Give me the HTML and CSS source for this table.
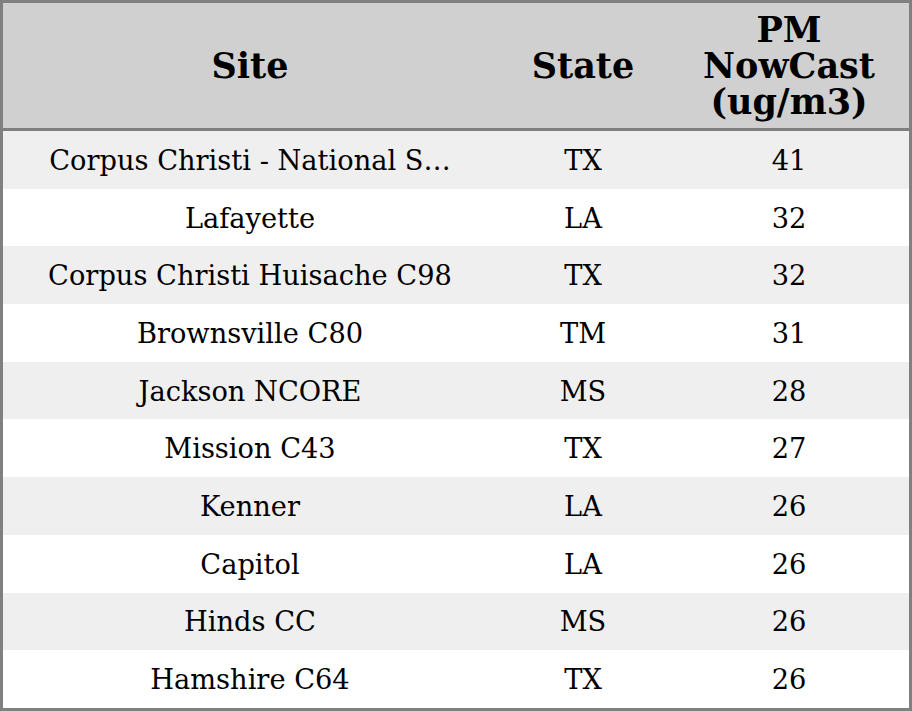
FILE: index.html
```html
<!DOCTYPE html>
<html>
<head>
<meta charset="utf-8">
<link rel="stylesheet" href="styles.css">
</head>
<body>
<div class="frame">
<table class="grid">
<colgroup><col class="c-site"><col class="c-state"><col class="c-pm"></colgroup>
<thead>
<tr><th>Site</th><th>State</th><th>PM<br>NowCast<br>(ug/m3)</th></tr>
</thead>
<tbody>
<tr><td>Corpus Christi - National S…</td><td>TX</td><td>41</td></tr>
<tr><td>Lafayette</td><td>LA</td><td>32</td></tr>
<tr><td>Corpus Christi Huisache C98</td><td>TX</td><td>32</td></tr>
<tr><td>Brownsville C80</td><td>TM</td><td>31</td></tr>
<tr><td>Jackson NCORE</td><td>MS</td><td>28</td></tr>
<tr><td>Mission C43</td><td>TX</td><td>27</td></tr>
<tr><td>Kenner</td><td>LA</td><td>26</td></tr>
<tr><td>Capitol</td><td>LA</td><td>26</td></tr>
<tr><td>Hinds CC</td><td>MS</td><td>26</td></tr>
<tr><td>Hamshire C64</td><td>TX</td><td>26</td></tr>
</tbody>
</table>
</div>
</body>
</html>
```
FILE: styles.css
```css
html, body {
  margin: 0;
  padding: 0;
  background: #ffffff;
}
.frame {
  box-sizing: border-box;
  width: 912px;
  height: 711px;
  border: 3px solid #808080;
  overflow: hidden;
}
.grid {
  width: 100%;
  height: 100%;
  border-collapse: collapse;
  table-layout: fixed;
  font-family: "DejaVu Serif", serif;
  color: #000;
}
.c-site { width: 494px; }
.c-state { width: 172px; }
.c-pm { width: 240px; }
.grid th {
  height: 125px;
  padding: 0;
  background: #d0d0d0;
  border-bottom: 3px solid #808080;
  font-size: 35px;
  font-weight: bold;
  line-height: 36px;
  text-align: center;
  vertical-align: middle;
}
.grid td {
  height: 56.7px;
  padding: 1px 0 0;
  font-size: 27.25px;
  text-align: center;
  vertical-align: middle;
  white-space: nowrap;
}
.grid tbody tr:nth-child(odd) td {
  background: #efefef;
}
```
